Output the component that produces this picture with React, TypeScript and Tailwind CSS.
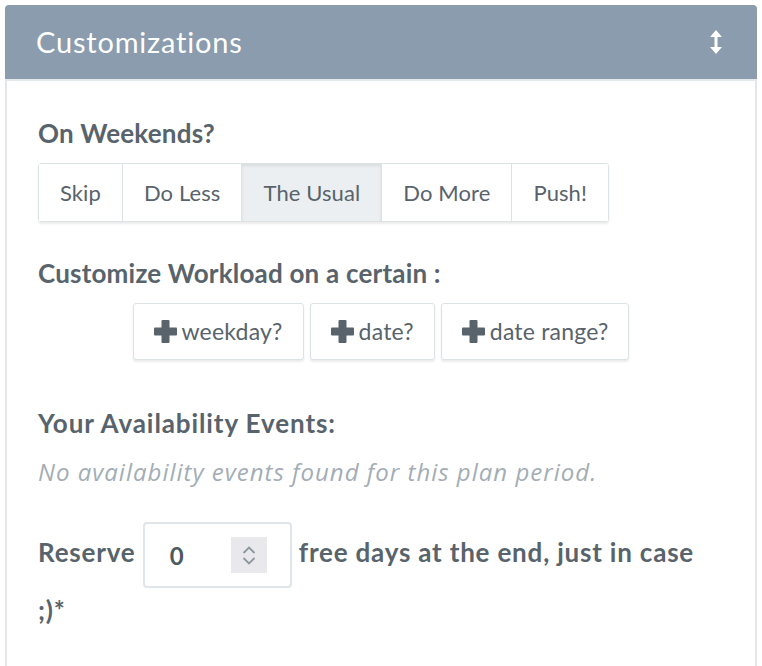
import React from 'react';

const font = { fontFamily: 'Lato, "Liberation Sans", sans-serif' };
const italicFont = { fontFamily: '"Open Sans", Lato, sans-serif' };

const PlusIcon = () => (
    <svg width="23" height="23" viewBox="0 0 23 23" className="shrink-0">
        <rect x="7.5" y="0" width="8" height="23" rx="1" fill="#58636b" />
        <rect x="0" y="7.5" width="23" height="8" rx="1" fill="#58636b" />
    </svg>
);

const UpDownIcon = () => (
    <svg width="12" height="24" viewBox="0 0 12 24">
        <path d="M6 0 L12 7 H7.5 V17 H12 L6 24 L0 17 H4.5 V7 H0 Z" fill="#ffffff" />
    </svg>
);

export default function App() {
    const weekendOptions = ['Skip', 'Do Less', 'The Usual', 'Do More', 'Push!'];
    const workloadOptions = ['weekday?', 'date?', 'date range?'];

    return (
        <div className="min-h-screen bg-white p-[5px] pb-0 text-[#58636b]" style={font}>
            <div className="flex flex-col">
                <div className="flex h-[76px] items-center justify-between rounded-t-[4px] border-b-2 border-[#e3e8eb] bg-[#8a9cad] pl-[31px] pr-[35px]">
                    <span className="text-[29px] tracking-[0.8px] text-white">Customizations</span>
                    <UpDownIcon />
                </div>

                <div className="border-x-2 border-[#e3e7ea] px-[31px] pt-[37px] pb-[60px]">
                    <h3 className="text-[26px] font-bold leading-[30px] tracking-[0.2px]">On Weekends?</h3>
                    <div className="mt-[15px] inline-flex rounded-[3px] border border-[#dde2e5] shadow-[0_2px_2px_rgba(0,0,0,0.08)]">
                        {weekendOptions.map((opt, i) => (
                            <button
                                key={opt}
                                className={
                                    'h-[57px] px-[21px] text-[22px] tracking-[0.1px] text-[#58636b] ' +
                                    (i > 0 ? 'border-l border-[#dde2e5] ' : '') +
                                    (opt === 'The Usual' ? 'bg-[#ebeff1] shadow-[inset_0_2px_3px_rgba(0,0,0,0.08)]' : 'bg-white')
                                }
                            >
                                {opt}
                            </button>
                        ))}
                    </div>

                    <h3 className="mt-[36px] text-[26px] font-bold leading-[30px] tracking-[0.2px]">Customize Workload on a certain :</h3>
                    <div className="mt-[15px] flex justify-center gap-[6px]">
                        {workloadOptions.map((opt) => (
                            <button
                                key={opt}
                                className="flex h-[57px] items-center gap-[5px] rounded-[3px] border border-[#dde2e5] bg-white px-[20px] text-[23px] tracking-[0.2px] text-[#58636b] shadow-[0_2px_2px_rgba(0,0,0,0.08)]"
                            >
                                <PlusIcon />
                                {opt}
                            </button>
                        ))}
                    </div>

                    <h3 className="mt-[48px] text-[26px] font-bold leading-[30px] tracking-[0.9px]">Your Availability Events:</h3>
                    <p className="mt-[19px] text-[24px] italic leading-[30px] tracking-[1px] text-[#a3adb5]" style={italicFont}>
                        No availability events found for this plan period.
                    </p>

                    <p className="mt-[35px] text-[26px] font-bold leading-[45px] tracking-[0.8px]">
                        Reserve{' '}
                        <span className="inline-flex h-[66px] w-[149px] items-center justify-between rounded-[4px] border-2 border-[#dfe5e8] pl-[25px] pr-[23px] align-middle text-[24px] tracking-normal">
                            <span className="font-bold text-[#4e585f]">0</span>
                            <span className="flex h-[36px] w-[36px] flex-col items-center justify-center gap-[3px] bg-[#e8e8ed]">
                                <svg width="14" height="8" viewBox="0 0 14 8">
                                    <path d="M1.5 7 L7 1.5 L12.5 7" stroke="#8e979e" strokeWidth="1.8" fill="none" />
                                </svg>
                                <svg width="14" height="8" viewBox="0 0 14 8">
                                    <path d="M1.5 1 L7 6.5 L12.5 1" stroke="#8e979e" strokeWidth="1.8" fill="none" />
                                </svg>
                            </span>
                        </span>{' '}
                        free days at the end, just in case
                        <br />
                        ;)*
                    </p>
                </div>
            </div>
        </div>
    );
}
